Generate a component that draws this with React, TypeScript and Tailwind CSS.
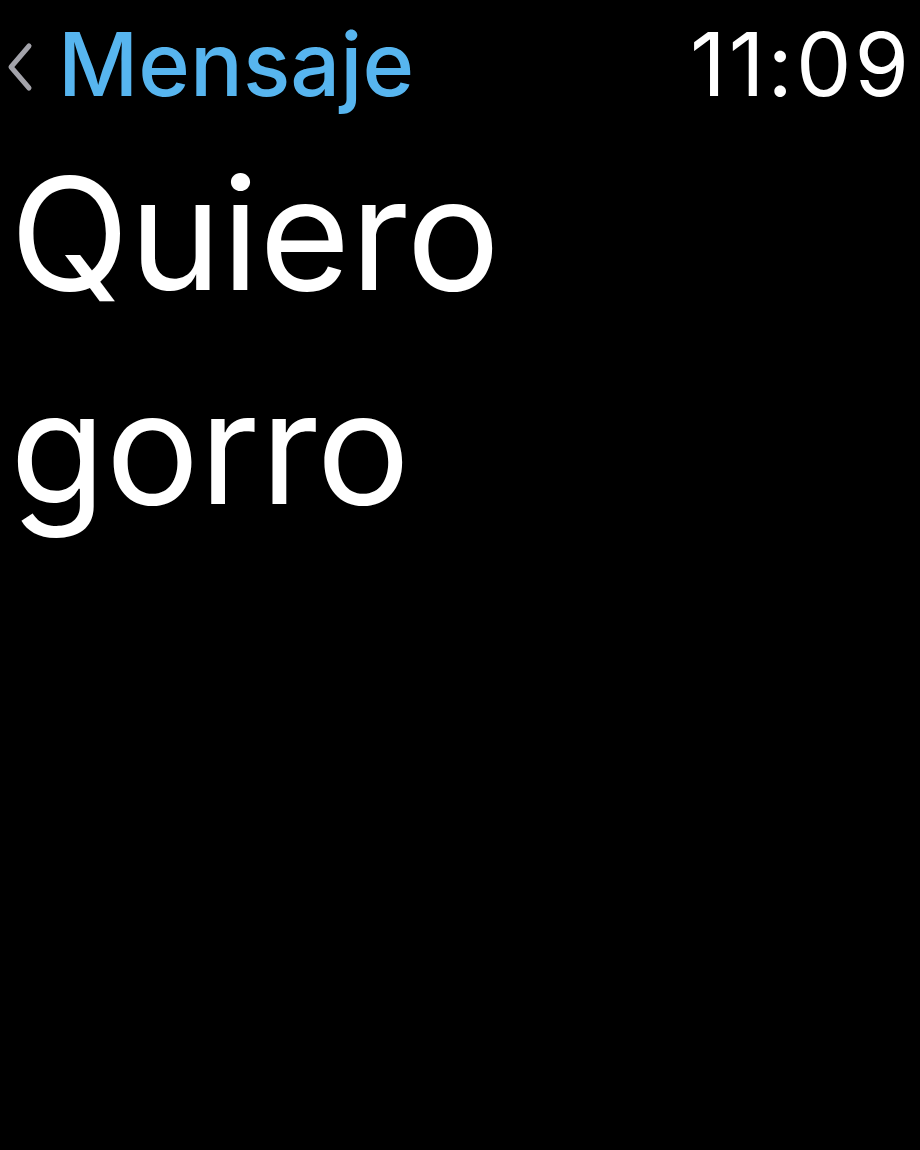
export default function App() {
  return (
    <div className="w-[920px] h-[1150px] bg-black text-white overflow-hidden" style={{ fontFamily: 'Inter, "Noto Sans", sans-serif' }}>
      <div className="flex items-start justify-between pl-[5px] pr-[8px] pt-[14px] h-[114px]">
        <div className="flex items-center">
          <svg width="28" height="52" viewBox="0 0 28 52" className="mr-[25px] mt-[6px]">
            <path d="M24 5 L6 26 L24 47" stroke="#a3a3aa" strokeWidth="5" fill="none" strokeLinecap="round" strokeLinejoin="round" />
          </svg>
          <span className="text-[88px] leading-[100px] font-medium text-[#57b5ef]">Mensaje</span>
        </div>
        <span className="text-[88px] leading-[100px] font-normal text-white tracking-[3px]">11:09</span>
      </div>
      <div className="pl-[10px] mt-[13px] text-[156px] leading-[214px] font-normal">
        <div>Quiero</div>
        <div>gorro</div>
      </div>
    </div>
  );
}
